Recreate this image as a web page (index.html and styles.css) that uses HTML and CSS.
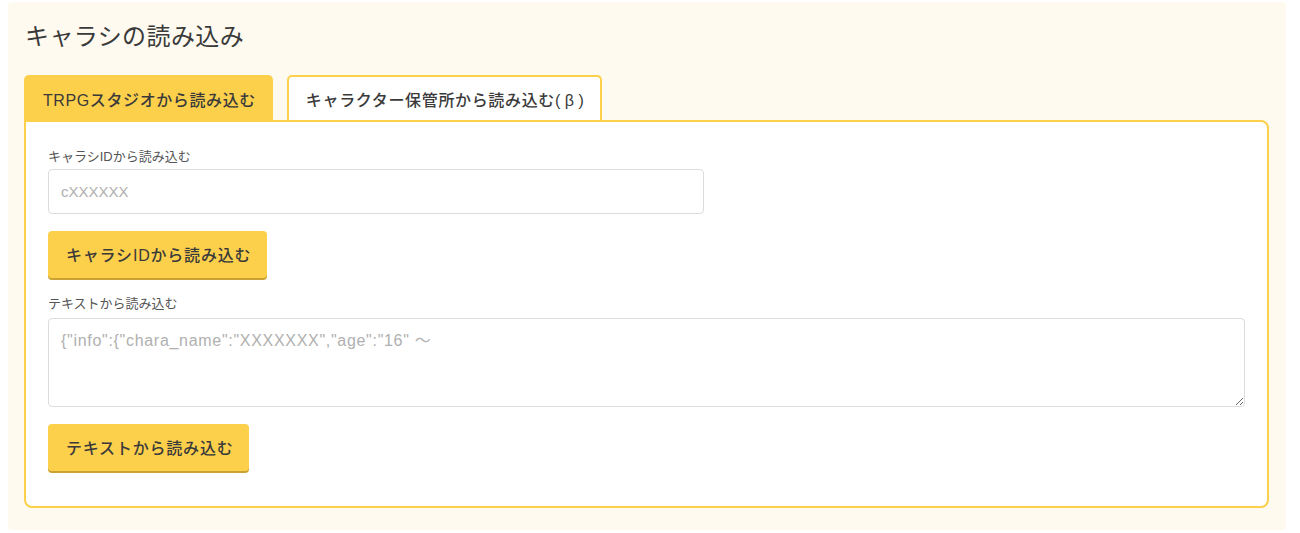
FILE: index.html
```html
<!DOCTYPE html>
<html lang="ja">
<head>
<meta charset="utf-8">
<title>キャラシの読み込み</title>
<link rel="stylesheet" href="styles.css">
</head>
<body>
<div class="card">
  <h2 class="title">キャラシの読み込み</h2>
  <div class="tabs">
    <div class="tab tab-active">TRPGスタジオから読み込む</div>
    <div class="tab tab-beta">キャラクター保管所から読み込む(&thinsp;β&thinsp;)</div>
  </div>
  <div class="panel">
    <div class="label">キャラシIDから読み込む</div>
    <input class="input" type="text" placeholder="cXXXXXX">
    <button class="btn">キャラシIDから読み込む</button>
    <div class="label label-area">テキストから読み込む</div>
    <textarea class="textarea" placeholder='{"info":{"chara_name":"XXXXXXX","age":"16" ～'></textarea>
    <button class="btn btn-last">テキストから読み込む</button>
  </div>
</div>
</body>
</html>
```
FILE: styles.css
```css
html, body {
  margin: 0;
  padding: 0;
  background: #ffffff;
}
body {
  font-family: "Liberation Sans", "Noto Sans CJK JP", sans-serif;
  color: #333333;
}
.card {
  background: #fffaf0;
  margin: 2px 14px 0 8px;
  padding: 17px 17px 22px 16px;
  border-radius: 4px;
}
.title {
  margin: 0 0 20px 1px;
  font-size: 24px;
  font-weight: 400;
  letter-spacing: 0.4px;
  line-height: 36px;
  color: #3a3a3a;
}
.tabs {
  display: flex;
  gap: 14px;
  align-items: flex-end;
}
.tab {
  box-sizing: border-box;
  height: 45px;
  padding: 0 15px 0 17px;
  display: flex;
  align-items: center;
  font-size: 16px;
  font-weight: 500;
  letter-spacing: 0.8px;
  color: #3a3a3a;
  background: #ffffff;
  border: 2px solid #fdd04c;
  border-bottom: none;
  border-radius: 5px 5px 0 0;
  white-space: nowrap;
}
.tab-active {
  background: #fdd04c;
  letter-spacing: 0.6px;
}
.tab-beta {
  letter-spacing: 0.65px;
}
.panel {
  display: flex;
  flex-direction: column;
  align-items: flex-start;
  background: #ffffff;
  border: 2px solid #fdd04c;
  border-radius: 0 8px 8px 8px;
  padding: 26px 22px 35px 22px;
}
.label {
  font-size: 13px;
  line-height: 18px;
  color: #555555;
  margin-bottom: 3px;
}
.label-area {
  margin-bottom: 5px;
}
.input {
  box-sizing: border-box;
  width: 656px;
  height: 45px;
  border: 1px solid #dcdcdc;
  border-radius: 4px;
  padding: 0 12px;
  font-family: "Liberation Sans", "Noto Sans CJK JP", sans-serif;
  font-size: 15px;
  color: #333;
  background: #fff;
  margin: 0;
}
.input::placeholder,
.textarea::placeholder {
  color: #b0b0b0;
}
.textarea {
  box-sizing: border-box;
  width: 100%;
  height: 89px;
  border: 1px solid #dcdcdc;
  border-radius: 4px;
  padding: 12px 12px;
  font-family: "Liberation Sans", "Noto Sans CJK JP", sans-serif;
  font-size: 16px;
  letter-spacing: 0.7px;
  line-height: 20px;
  margin: 0;
  resize: vertical;
}
.btn {
  box-sizing: border-box;
  height: 47px;
  padding: 0 16px 2px 18px;
  margin: 17px 0 17px 0;
  background: #fdd04c;
  border: none;
  border-radius: 4px;
  box-shadow: 0 2px 0 #c9a233;
  font-family: "Liberation Sans", "Noto Sans CJK JP", sans-serif;
  font-size: 16px;
  font-weight: 500;
  letter-spacing: 0.8px;
  color: #3a3a3a;
  cursor: pointer;
}
.btn-last {
  margin-bottom: 0;
  padding-right: 15px;
}
```
